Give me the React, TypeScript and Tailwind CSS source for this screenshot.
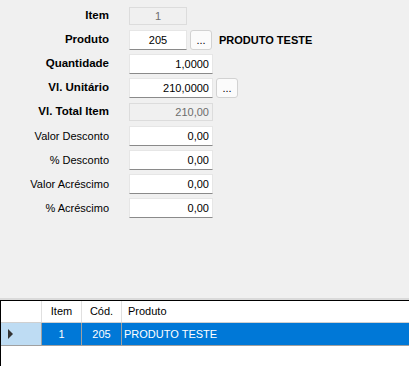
const font = { fontFamily: '"Liberation Sans", Arial, sans-serif' };

type Row = {
  label: string;
  bold?: boolean;
  value: string;
  width: string;
  disabled?: boolean;
  align?: "center" | "right";
  button?: boolean;
  extra?: string;
};

const rows: Row[] = [
  { label: "Item", bold: true, value: "1", width: "w-[58px]", disabled: true, align: "center" },
  { label: "Produto", bold: true, value: "205", width: "w-[58px]", align: "center", button: true, extra: "PRODUTO TESTE" },
  { label: "Quantidade", bold: true, value: "1,0000", width: "w-[84px]" },
  { label: "Vl. Unitário", bold: true, value: "210,0000", width: "w-[84px]", button: true },
  { label: "Vl. Total Item", bold: true, value: "210,00", width: "w-[84px]", disabled: true },
  { label: "Valor Desconto", value: "0,00", width: "w-[84px]" },
  { label: "% Desconto", value: "0,00", width: "w-[84px]" },
  { label: "Valor Acréscimo", value: "0,00", width: "w-[84px]" },
  { label: "% Acréscimo", value: "0,00", width: "w-[84px]" },
];

function Field({ row }: { row: Row }) {
  const base = row.disabled
    ? "bg-[#f0f0f0] border border-[#dcdcdc] text-[#6d6d6d] h-[18px]"
    : "bg-white border border-[#e6e6e6] border-b-[#8a8a8a] text-black h-[20px]";
  const align = row.align === "center" ? "justify-center" : "justify-end pr-[3px]";
  return (
    <div className={`${row.width} ${base} ${align} flex items-center text-[11px] leading-none`}>
      {row.value}
    </div>
  );
}

function DotsButton() {
  return (
    <div className="w-[22px] h-[20px] bg-[#fbfbfb] border border-[#d2d2d2] rounded-[3px] flex items-end justify-center pb-[3px] text-[11px] leading-none text-black">
      ...
    </div>
  );
}

export default function App() {
  return (
    <div className="w-[409px] h-[366px] bg-[#f0f0f0] flex flex-col overflow-hidden" style={font}>
      <div className="h-[298px] pt-[4px] flex flex-col">
        {rows.map((row) => (
          <div key={row.label} className="h-[24px] flex items-center">
            <div
              className={`w-[109px] text-right text-black ${row.bold ? "font-bold text-[11.5px]" : "text-[11px]"}`}
            >
              {row.label}
            </div>
            <div className="ml-[20px] flex items-center gap-[3px]">
              <Field row={row} />
              {row.button && <DotsButton />}
              {row.extra && (
                <span className="ml-[4px] font-bold text-[11px] text-black">{row.extra}</span>
              )}
            </div>
          </div>
        ))}
      </div>
      <div className="h-[2px] bg-[#dadada]" />
      <div className="flex-1 bg-white border-t border-l border-black flex flex-col">
        <div className="h-[22px] flex border-b border-[#d0d0d0] text-[11px] text-black">
          <div className="w-[41px] border-r border-[#e0e0e0]" />
          <div className="w-[40px] border-r border-[#e0e0e0] flex items-center justify-center">Item</div>
          <div className="w-[40px] border-r border-[#e0e0e0] flex items-center justify-center">Cód.</div>
          <div className="flex-1 flex items-center pl-[6px]">Produto</div>
        </div>
        <div className="h-[23px] flex border-b border-[#a0a0a0] text-[11px]">
          <div className="w-[41px] bg-[#bedcf3] border-r border-[#a0a0a0] flex items-center pl-[7px]">
            <svg width="5" height="10" viewBox="0 0 5 10">
              <path d="M0 0 L5 5 L0 10 Z" fill="#333" />
            </svg>
          </div>
          <div className="w-[40px] bg-[#0078d7] text-white border-r border-[#a0a0a0] flex items-center justify-center">1</div>
          <div className="w-[40px] bg-[#0078d7] text-white border-r border-[#a0a0a0] flex items-center justify-center">205</div>
          <div className="flex-1 bg-[#0078d7] text-white flex items-center pl-[2px]">PRODUTO TESTE</div>
        </div>
      </div>
    </div>
  );
}
